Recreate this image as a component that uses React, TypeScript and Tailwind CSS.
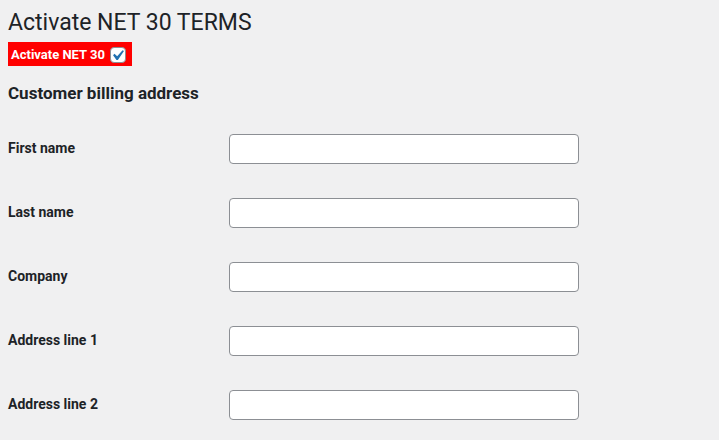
import React from "react";

const fields = ["First name", "Last name", "Company", "Address line 1", "Address line 2"];

export default function App() {
  return (
    <div className="min-h-[440px] w-full bg-[#f0f0f1] text-[#1d2327] px-[8px] pt-[8px]" style={{ fontFamily: "Roboto, 'Liberation Sans', sans-serif" }}>
      <h1 className="text-[23px] leading-[29px] font-normal">Activate NET 30 TERMS</h1>
      <div className="mt-[5px] inline-flex items-center h-[24px] w-[124px] bg-[#ff0000] pl-[3px]">
        <span className="text-white text-[13px] font-bold leading-none">Activate NET 30</span>
        <span className="ml-[5px] mt-[2px] w-[16px] h-[16px] bg-white border border-[#8c8f94] rounded-[4px] flex items-center justify-center overflow-visible">
          <svg width="21" height="21" viewBox="0 0 20 20" className="shrink-0 -m-[3px]">
            <path d="M14.83 4.89l1.34.94-5.81 8.38H9.02L5.78 9.67l1.34-1.25 2.57 2.4z" fill="#2271b1" />
          </svg>
        </span>
      </div>
      <h2 className="mt-[16px] text-[17px] leading-[22px] font-bold">Customer billing address</h2>
      <div className="mt-[30px] flex flex-col">
        {fields.map((f) => (
          <div key={f} className="flex items-center h-[30px] mb-[34px]">
            <label className="w-[221px] pb-[2px] text-[14px] leading-[18px] font-bold">{f}</label>
            <input type="text" className="w-[350px] h-[30px] bg-white border border-[#8c8f94] rounded-[4px] outline-none" />
          </div>
        ))}
      </div>
    </div>
  );
}
